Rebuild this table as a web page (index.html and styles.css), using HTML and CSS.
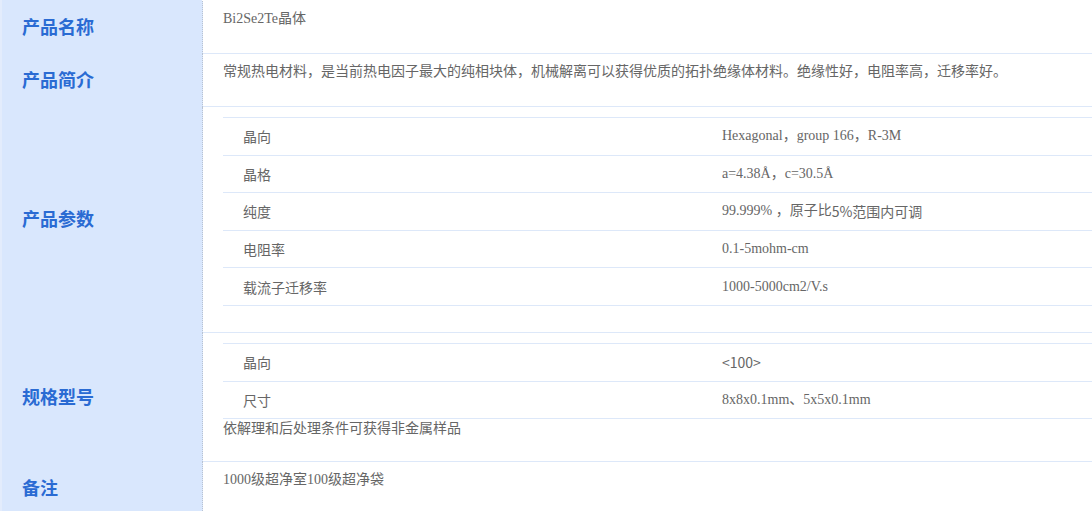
FILE: index.html
```html
<!DOCTYPE html>
<html lang="zh-CN">
<head>
<meta charset="utf-8">
<title>Bi2Se2Te晶体</title>
<link rel="stylesheet" href="styles.css">
</head>
<body>
<div class="sheet">
  <div class="label">产品名称</div>
  <div class="value">Bi2Se2Te晶体</div>

  <div class="label">产品简介</div>
  <div class="value">常规热电材料，是当前热电因子最大的纯相块体，机械解离可以获得优质的拓扑绝缘体材料。绝缘性好，电阻率高，迁移率好。</div>

  <div class="label">产品参数</div>
  <div class="value">
    <table class="spec">
      <tr><td class="key">晶向</td><td>Hexagonal，group 166，R-3M</td></tr>
      <tr><td class="key">晶格</td><td>a=4.38Å，c=30.5Å</td></tr>
      <tr><td class="key">纯度</td><td>99.999% ，原子比<span class="sans">5%范围内可调</span></td></tr>
      <tr><td class="key">电阻率</td><td>0.1-5mohm-cm</td></tr>
      <tr><td class="key">载流子迁移率</td><td>1000-5000cm2/V.s</td></tr>
    </table>
  </div>

  <div class="label">规格型号</div>
  <div class="value">
    <table class="spec spec-tight">
      <tr><td class="key">晶向</td><td class="sans">&lt;100&gt;</td></tr>
      <tr><td class="key">尺寸</td><td>8x8x0.1mm、5x5x0.1mm</td></tr>
    </table>
    <div class="note">依解理和后处理条件可获得非金属样品</div>
  </div>

  <div class="label">备注</div>
  <div class="value">1000级超净室100级超净袋</div>
</div>
</body>
</html>
```

FILE: styles.css
```css
html, body {
  margin: 0;
  padding: 0;
  background: #ffffff;
}

body {
  font-family: "Liberation Serif", "Noto Sans CJK SC", serif;
  font-size: 14px;
  color: #666666;
  overflow: hidden;
}

.sheet {
  display: grid;
  grid-template-columns: 203px 1fr;
  width: 1092px;
  padding-top: 1px;
  background: linear-gradient(to right, #e3ecfc 0 2px, #d9e7fd 2px 202px, transparent 202px);
}

.label {
  display: flex;
  align-items: center;
  padding: 0 0 3px 20px;
  margin-left: 2px;
  background: #d9e7fd;
  border-right: 1px dotted #b9c3d2;
  font-family: "Noto Sans CJK SC", "Noto Sans", sans-serif;
  font-size: 18px;
  font-weight: 700;
  color: #2a6bd3;
}

.value {
  padding: 8px 0 24px 20px;
  line-height: 20px;
  border-bottom: 1px solid #dde8f9;
}

.spec {
  width: 100%;
  border-collapse: collapse;
  margin: 2px 0;
  line-height: 20px;
}

.spec td {
  padding: 8.3px 0 8.3px 20px;
  border-top: 1px solid #dde8f9;
  border-bottom: 1px solid #dde8f9;
  vertical-align: middle;
}

.spec td.key {
  width: 459px;
  font-family: "Noto Sans CJK SC", "Noto Sans", sans-serif;
}

.spec-tight {
  margin-bottom: 0;
}

.note {
  margin-top: -2px;
  font-family: "Noto Sans CJK SC", "Noto Sans", sans-serif;
}

.sans {
  font-family: "Noto Sans CJK SC", "Noto Sans", sans-serif;
}

span.sans {
  vertical-align: top;
}
```
